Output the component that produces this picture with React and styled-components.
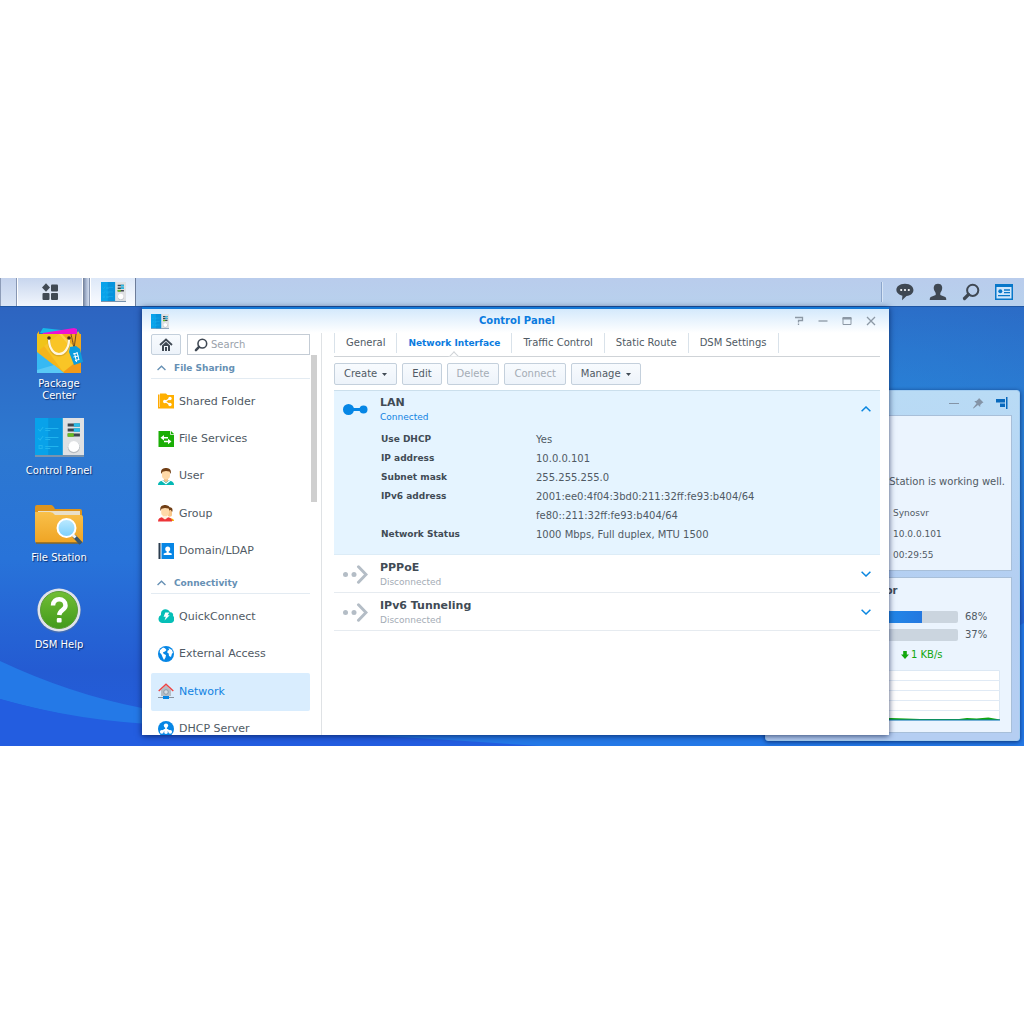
import React from "react";
import styled, { createGlobalStyle, css } from "styled-components";

const GlobalStyle = createGlobalStyle`
  * { box-sizing: border-box; }
  body {
    margin: 0;
    background: #fff;
    color: #505a64;
    font: 10px/14px "DejaVu Sans", sans-serif;
  }
  #root {
    min-height: 100vh;
    display: flex;
    flex-direction: column;
    justify-content: center;
  }
  button, input { font: inherit; color: inherit; }
  svg { display: block; flex: none; }
`;

const Desktop = styled.main`
  position: relative;
  display: flex;
  flex-direction: column;
  min-height: 468px;
  overflow: hidden;
  isolation: isolate;
`;

const Wallpaper = styled.svg`
  position: absolute;
  inset: 0;
  width: 100%;
  height: 100%;
  z-index: -1;
`;

const PlainButton = styled.button`
  display: flex;
  align-items: center;
  justify-content: center;
  padding: 0;
  border: 0;
  background: none;
  cursor: pointer;
`;

const Taskbar = styled.header`
  display: flex;
  height: 29px;
  background: linear-gradient(#b9ccec, #b8d1ed);
  border-bottom: 1px solid #1e56a4;
`;

const TaskbarEdge = styled.div`
  width: 17px;
  border-left: 1px solid #8d9cb8;
  border-right: 1px solid #8796b2;
  background: linear-gradient(#c4d2ec, #dbe6f6);
`;

const TaskButton = styled(PlainButton)`
  width: ${(p) => p.$width}px;
  background: linear-gradient(${(p) => (p.$active ? "#dde8f8, #fafcff" : "#c8d6ee, #f2f6fd")});
  border-left: 1px solid #fff;
  border-right: 1px solid ${(p) => (p.$active ? "#6d7d9a" : "#fff")};
`;

const TaskGap = styled.div`
  width: 7px;
  background: linear-gradient(90deg, #6f7d97, #a6b5d0 3px, #d3def0 6px);
  border-right: 1px solid #8796b2;
`;

const Tray = styled.nav`
  display: flex;
  margin-left: auto;
  padding: 0 4px 0 7px;
  position: relative;
  &::before {
    content: "";
    width: 1px;
    position: absolute;
    left: 0;
    top: 4px;
    bottom: 4px;
    background: #8ba5cb;
    box-shadow: 1px 0 #d7e5f6;
  }
`;

const TrayButton = styled(PlainButton)`
  width: 33px;
`;

const Shortcuts = styled.nav`
  width: 118px;
  padding-top: 19px;
`;

const Shortcut = styled(PlainButton)`
  width: 100%;
  height: 87px;
  flex-direction: column;
  justify-content: flex-start;
  gap: 4px;
  color: #fff;
  line-height: 12px;
  text-shadow: 1px 1px 1px #0b2d6b;
  span { width: 72px; }
`;

const Window = styled.section`
  position: absolute;
  top: 29px;
  right: 135px;
  bottom: 11px;
  left: 142px;
  display: flex;
  flex-direction: column;
  background: #fff;
  border-top: 2px solid #1478d6;
  box-shadow: 0 1px 6px rgba(0, 20, 70, 0.75);
`;

const TitleBar = styled.header`
  display: grid;
  grid-template-columns: 1fr auto 1fr;
  align-items: center;
  height: 24px;
  padding: 0 6px 0 9px;
  background: linear-gradient(#d4e9fc, #fff);
`;

const WindowTitle = styled.h1`
  margin: 0;
  font-size: 10px;
  color: #0a7be0;
`;

const Controls = styled.div`
  display: flex;
  justify-content: flex-end;
`;

const ControlButton = styled(PlainButton)`
  width: 24px;
  height: 24px;
`;

const WindowBody = styled.div`
  display: flex;
  flex: 1;
  min-height: 0;
`;

const Sidebar = styled.aside`
  display: flex;
  flex-direction: column;
  width: 180px;
  padding: 1px 3px 0 9px;
  border-right: 1px solid #dfe2e5;
`;

const SearchRow = styled.div`
  display: flex;
  gap: 6px;
  margin-right: 8px;
`;

const buttonFace = css`
  border: 1px solid #c4d0dc;
  border-radius: 2px;
  background: linear-gradient(#f8fbfe, #edf3fa);
`;

const HomeButton = styled(PlainButton)`
  ${buttonFace}
  width: 30px;
  height: 21px;
`;

const SearchField = styled.label`
  display: flex;
  align-items: center;
  gap: 3px;
  flex: 1;
  min-width: 0;
  height: 21px;
  padding-left: 6px;
  border: 1px solid #c4ccd5;
  input {
    min-width: 0;
    flex: 1;
    padding: 0;
    border: 0;
    outline: 0;
    background: none;
  }
  input::placeholder { color: #9aa2ab; opacity: 1; }
`;

const SidebarScroll = styled.div`
  display: flex;
  gap: 1px;
  flex: 1;
  min-height: 0;
  overflow: hidden;
`;

const ScrollThumb = styled.div`
  width: 6px;
  height: 147px;
  background: #cfcfcf;
`;

const Groups = styled.div`
  width: 159px;
`;

const GroupTitle = styled(PlainButton)`
  width: 100%;
  height: 24px;
  justify-content: flex-start;
  gap: 8px;
  padding: 2px 0 0 6px;
  border-bottom: 1px solid #e3ebf2;
  color: #6690b4;
  font-size: 9px;
  font-weight: bold;
`;

const GroupList = styled.ul`
  display: grid;
  grid-auto-rows: 1fr;
  height: ${(p) => p.$height}px;
  margin: 4px 0 0;
  padding: 0;
  list-style: none;
`;

const NavLink = styled.a`
  display: flex;
  align-items: center;
  gap: 5px;
  height: 100%;
  padding-left: 7px;
  border-radius: 2px;
  font-size: 11px;
  text-decoration: none;
  color: ${(p) => (p.$active ? "#1283e2" : "#505a64")};
  background: ${(p) => (p.$active ? "#d9edfe" : "none")};
`;

const Content = styled.div`
  flex: 1;
  min-width: 0;
  padding: 0 9px 0 12px;
`;

const Tabs = styled.nav`
  display: flex;
  height: 24px;
  border-bottom: 1px solid #cfd3d7;
`;

const Tab = styled(PlainButton)`
  position: relative;
  height: 20px;
  padding: 0 11px;
  border-right: 1px solid #d9e2ea;
  white-space: nowrap;
  &:first-child { border-left: 1px solid #d9e2ea; }
  ${(p) =>
    p.$active &&
    css`
      color: #0a7be0;
      font-size: 9px;
      font-weight: bold;
      &::after {
        content: "";
        position: absolute;
        left: 50%;
        bottom: -8px;
        width: 7px;
        height: 7px;
        margin-left: -4px;
        background: #fff;
        border: 1px solid #cfd3d7;
        border-width: 1px 0 0 1px;
        transform: rotate(45deg);
        clip-path: polygon(-20% -20%, 110% -20%, -20% 110%);
      }
    `}
`;

const Toolbar = styled.div`
  display: flex;
  gap: 5px;
  margin: 6px 0 5px;
`;

const ToolButton = styled(PlainButton)`
  ${buttonFace}
  gap: 5px;
  height: 22px;
  padding: 0 9px;
  &:disabled { color: #a4acb5; cursor: default; }
`;

const Interfaces = styled.ul`
  margin: 0;
  padding: 0;
  list-style: none;
`;

const Interface = styled.li`
  border-bottom: 1px solid #e6ebf0;
  ${(p) => p.$open && css`
    background: #e5f4ff;
    box-shadow: inset 0 1px #cbdfec;
    border-color: #dcecf7;
  `}
`;

const InterfaceHeader = styled(PlainButton)`
  width: 100%;
  height: 37px;
  gap: 12px;
  padding: 0 9px;
  text-align: left;
`;

const InterfaceText = styled.span`
  display: flex;
  flex-direction: column;
  flex: 1;
  padding-top: 2px;
`;

const InterfaceName = styled.strong`
  font-size: 11px;
  line-height: 15px;
  color: #414b55;
`;

const InterfaceState = styled.span`
  font-size: 9px;
  color: ${(p) => (p.$on ? "#1283e2" : "#a4acb5")};
`;

const Details = styled.table`
  margin: 3px 0 10px 47px;
  border-spacing: 0;
  line-height: 19px;
  th {
    width: 155px;
    padding: 0;
    font-size: 9px;
    text-align: left;
    vertical-align: top;
    color: #414b55;
  }
  td { padding: 0; }
`;

const Widgets = styled.aside`
  position: absolute;
  right: 4px;
  bottom: 5px;
  width: 255px;
  padding: 0 7px 7px;
  border: 1px solid #a5cdf0;
  border-radius: 3px;
  background: linear-gradient(#b9dbf5, #b4cff2 55%, #b5cef2);
  box-shadow: 0 1px 4px rgba(0, 20, 70, 0.7);
`;

const WidgetControls = styled.div`
  display: flex;
  justify-content: flex-end;
  height: 24px;
  margin-right: -2px;
`;

const WidgetCard = styled.section`
  height: 156px;
  border: 1px solid #a8bfd9;
  background: #ebf4fe;
  & + & {
    margin-top: 6px;
    padding: 0 11px 0 10px;
  }
`;

const HealthText = styled.p`
  margin: 0;
  padding: 56px 6px 11px;
  line-height: 20px;
  text-align: right;
  white-space: nowrap;
`;

const HealthValues = styled.ul`
  margin: 0;
  padding: 0 0 0 119px;
  list-style: none;
  font-size: 9px;
  line-height: 21px;
`;

const MonitorTitle = styled.h2`
  margin: 0;
  padding: 6px 0 12px 14px;
  font-size: 10px;
  line-height: 14px;
  color: #414b55;
`;

const Meter = styled.div`
  display: grid;
  grid-template-columns: 54px 1fr 35px;
  gap: 7px;
  align-items: center;
  height: 12px;
  margin-bottom: 6px;
`;

const MeterTrack = styled.div`
  height: 12px;
  overflow: hidden;
  border-radius: 2px;
  background: #cbd5df;
`;

const MeterFill = styled.div`
  height: 100%;
  background: linear-gradient(90deg, #1d9bf3, #2478e0);
`;

const Rate = styled.div`
  display: flex;
  align-items: center;
  gap: 2px;
  height: 16px;
  margin: 7px 0;
  padding-left: 117px;
  color: #12a70d;
`;

const Chart = styled.svg`
  width: 100%;
  height: 51px;
`;

function ControlPanelIcon({ width, height }) {
  return (
    <svg width={width} height={height} viewBox="0 0 48 39" preserveAspectRatio="none">
      <rect width="48" height="39" fill="#dfe1e3" />
      <rect y="37" width="48" height="2" fill="#245483" opacity=".55" />
      <rect width="27" height="37" fill="#08a2ea" />
      <path d="M13 0h14v37H13z" fill="#0793dc" />
      <path d="M3 11l2 2 3-4M3 20l2 2 3-4M4 27.500h3v3H4zM10 10.500h13M10 12.500h5M10 19.500h13M10 21.500h5M10 28.500h13M10 30.500h5" fill="none" stroke="#20b4ee" strokeWidth="1" />
      <path d="M32 7h12M32 12h12M32 17h12" stroke="#40464d" strokeWidth="3" />
      <path d="M38 7h6M38 12h6" stroke="#29bce9" strokeWidth="3.500" />
      <path d="M32 17h6" stroke="#68bd22" strokeWidth="3.500" />
      <circle cx="38" cy="29.300" r="5.900" fill="#b6bbc0" />
      <circle cx="38" cy="28.500" r="5.400" fill="#fff" />
    </svg>
  );
}

function PackageIcon() {
  return (
    <svg width="48" height="48" viewBox="0 0 48 48">
      <path d="M5 7l3-5 36 4 1 5z" fill="#16b9e9" />
      <path d="M8 7l31-5 3 1v6H7z" fill="#ee12d2" />
      <path d="M2 8l2-3v3h38l1-3 3 5v37H2z" fill="#f5b51c" />
      <path d="M2 8h22L2 26z" fill="#f0c419" />
      <path d="M24 8l22 26V8z" fill="#f2a91c" />
      <path d="M24 8L9 20l20 27 17-13z" fill="#f9c526" />
      <path d="M46 34L24 8h3l19 20z" fill="#fbd148" />
      <path d="M46 32v15H27z" fill="#f39a18" />
      <path d="M2 26l27 21H2z" fill="#36b9f3" />
      <path d="M2 44l17-5 10 8H2z" fill="#59c9f6" />
      <path d="M14 14c0 20 20 20 20 0" fill="none" stroke="#a47b22" strokeWidth="3" opacity=".35" />
      <path d="M14 13c0 20 20 20 20 0" fill="none" stroke="#fff6df" strokeWidth="2.200" />
      <circle cx="14" cy="12" r="1.800" fill="#44301b" />
      <circle cx="34" cy="12" r="1.800" fill="#44301b" />
      <path d="M36 8c1 5 2 8 3 15M41 8l-2 15" stroke="#6e4b22" fill="none" />
      <path d="M35 21l6-1 4 3 3 13-9 3-5-13z" fill="#0d9ddd" />
      <path d="M38 28l4-1M38.500 31l5-1M40 34.500l4-1M39.500 27l2 9M42 26l2 8" stroke="#fff" strokeWidth="1" />
    </svg>
  );
}

function FolderIcon() {
  return (
    <svg width="50" height="48" viewBox="0 0 50 48">
      <defs>
        <linearGradient id="folder" x2="0" y2="1"><stop stopColor="#f9c04a" /><stop offset="1" stopColor="#efa424" /></linearGradient>
        <linearGradient id="lens" x2="0" y2="1"><stop stopColor="#bdeaff" /><stop offset="1" stopColor="#7acffc" /></linearGradient>
      </defs>
      <path d="M1 7q0-2 2-2h14q2 0 4 4h25q2 0 2 2v8H1z" fill="#dd941d" />
      <path d="M4 11h42v6H4z" fill="#e9dfc8" />
      <path d="M1 12h15q3 0 5 3h26q2 0 2 2v24q0 2-2 2H3q-2 0-2-2z" fill="url(#folder)" />
      <path d="M2 43h45" stroke="#8b671f" strokeWidth="1.500" />
      <path d="M40 36l7 7.500" stroke="#38566e" strokeWidth="4" />
      <path d="M39 35l2.500 2.500" stroke="#eef3f6" strokeWidth="3" />
      <circle cx="32.500" cy="28" r="9" fill="url(#lens)" stroke="#fff" strokeWidth="2" />
    </svg>
  );
}

function HelpIcon() {
  return (
    <svg width="48" height="48" viewBox="0 0 48 48">
      <defs><linearGradient id="help" x2="0" y2="1"><stop stopColor="#72be35" /><stop offset="1" stopColor="#429a1b" /></linearGradient></defs>
      <circle cx="24" cy="24" r="22" fill="#54719e" opacity=".6" />
      <circle cx="24" cy="23" r="21.500" fill="#dfe3ea" />
      <circle cx="24" cy="23" r="18.500" fill="url(#help)" stroke="#5a9c37" />
      <path d="M18 18.500c0-8.500 12.500-8 12.500 0 0 4.500-6 4.500-6.300 9.500" fill="none" stroke="#fff" strokeWidth="4.500" />
      <rect x="21.800" y="31" width="4.800" height="4.500" rx="1" fill="#fff" />
    </svg>
  );
}

function SearchIcon({ size = 18 }) {
  return (
    <svg width={size} height={size} viewBox="0 0 18 18" fill="none" stroke="#3f4853">
      <circle cx="10.700" cy="7.300" r="5.600" strokeWidth="2" />
      <path d="M6.500 11.500L2.500 15.500" strokeWidth="3.200" strokeLinecap="round" />
    </svg>
  );
}

function Chevron({ up, color = "#0a86e0", width = 10 }) {
  return (
    <svg width={width} height="6" viewBox="0 0 10 6" fill="none" stroke={color} strokeWidth="1.500">
      <path d={up ? "M.6 5.300L5 1l4.400 4.300" : "M.6.7L5 5 9.400.7"} />
    </svg>
  );
}

const Caret = () => (
  <svg width="5" height="3" viewBox="0 0 5 3"><path d="M0 0h5L2.500 3z" fill="#414b55" /></svg>
);

const navGlyphs = {
  shared: (
    <>
      <path d="M0 1.500h1.500V14H16v1.500H0z" fill="#ffa900" />
      <path d="M2 .5h6L9.500 2H16v13H2z" fill="#ffb000" />
      <path d="M12 5.500L7 8.500l5 3" fill="none" stroke="#fff" strokeWidth="1.300" />
      <g fill="#fff"><circle cx="12" cy="5.500" r="1.700" /><circle cx="6.700" cy="8.500" r="1.700" /><circle cx="12" cy="11.500" r="1.700" /></g>
    </>
  ),
  files: (
    <>
      <path d="M.5 0h11.700v3.700H16V16H.5z" fill="#1aae05" />
      <path d="M13 0l3 3h-3z" fill="#1aae05" />
      <path d="M2.500 6.800L6 4v2h4v1.600H6v2zM13.500 10.500L10 7.800v1.900H6v1.600h4v2z" fill="#fff" />
    </>
  ),
  user: (
    <>
      <path d="M0 17c0-3 2.500-4 5.500-4.500h5C13.500 13 16 14 16 17z" fill="#04b8b4" />
      <path d="M6 10h4v3l-2 1.500L6 13z" fill="#f0bd87" />
      <path d="M4 3h8v5c0 4.500-8 4.500-8 0z" fill="#ffd9a8" />
      <path d="M3.300 6C2 .5 6 0 8 0s6 .5 4.700 6l-1.200-2.500L8 3l-3.500.8z" fill="#713f16" />
      <path d="M5 12.500l3 2.500 3-2.500 1.500.5L8 16.500 3.500 13z" fill="#fff" />
    </>
  ),
  group: (
    <>
      <path d="M9 15c0-2 7-3 7 1H9z" fill="#f4ad05" />
      <path d="M10 5h4v5c0 2-3 2-4 1z" fill="#f8c78a" />
      <path d="M9.500 3c4-2 6 1 4.600 4l-1.200-2H10z" fill="#713f16" />
      <path d="M0 16.500c0-3 2-4 5-4.500h4c3 .5 5 1.500 5 4.500z" fill="#ed3438" />
      <path d="M3.200 3H11v5c0 4.500-7.800 4.500-7.800 0z" fill="#ffd9a8" />
      <path d="M2.500 6C1.300.8 5 0 7 0s6 .8 4.800 6l-1.200-2.500L7 3l-3.500.8z" fill="#713f16" />
      <path d="M5 11h4l1 1.500-3 2-3-2z" fill="#fff0dc" />
    </>
  ),
  domain: (
    <>
      <path d="M.5 0h2v16h-2z" fill="#2b3d4f" />
      <path d="M3.500 0H16v16H3.500z" fill="#0686e5" />
      <circle cx="9.700" cy="6" r="2.500" fill="#fff" />
      <path d="M8.700 7h2v2.500l3 1V12H5.700v-1.500l3-1z" fill="#fff" />
    </>
  ),
  quick: (
    <>
      <path d="M4 15a4.200 4.200 0 0 1-1-8C2 .5 10-.5 12 4.300c3-.3 3.500 2.600 3 3.500C17.500 10 16 15 13 15z" fill="#05bfb7" />
      <path d="M7.300 4.500h4L9.700 7.300h2L6.500 12.500l1.300-3.700H5.600z" fill="#fff" />
    </>
  ),
  external: (
    <>
      <circle cx="8" cy="8" r="8" fill="#0686e5" />
      <path d="M2 4l3-2.500 2 .8L8.500 4 7 5.500 5 6.200l.5 1.500L8 9l-.5 2.500L6 14 4.500 11 3.500 8.500 1.700 6.500zM10.500 2l3.500 2 1 3-1 .5-1 3.500-2-1-.3-2.500-1.500-1 .5-2L11.200 4z" fill="#fff" />
    </>
  ),
  network: (
    <>
      <path d="M3 7l5-4.500L13 7v6H3z" fill="#b5bdc5" />
      <circle cx="8" cy="9" r="2.300" fill="#d5dce2" stroke="#8f9ba7" />
      <path d="M.7 8L8 1.300 15.300 8" fill="none" stroke="#ee4545" strokeWidth="1.500" />
      <path d="M0 14.500h16" stroke="#8793a0" />
      <path d="M5 13h6v3H5z" fill="#0686e5" />
    </>
  ),
  dhcp: (
    <>
      <circle cx="8" cy="8" r="8" fill="#0686e5" />
      <circle cx="8" cy="4.600" r="2.200" fill="#fff" />
      <path d="M8 5v5M8 8L3.500 11M8 8l4.500 3" stroke="#fff" strokeWidth="1.700" />
      <g fill="#fff"><circle cx="3.800" cy="10.800" r="1.900" /><circle cx="8" cy="11" r="1.900" /><circle cx="12.200" cy="10.800" r="1.900" /></g>
    </>
  ),
};

const groups = [
  { title: "File Sharing", height: 187, items: [["Shared Folder", "shared"], ["File Services", "files"], ["User", "user"], ["Group", "group"], ["Domain/LDAP", "domain"]] },
  { title: "Connectivity", height: 150, items: [["QuickConnect", "quick"], ["External Access", "external"], ["Network", "network"], ["DHCP Server", "dhcp"]] },
];

const details = [
  ["Use DHCP", ["Yes"]],
  ["IP address", ["10.0.0.101"]],
  ["Subnet mask", ["255.255.255.0"]],
  ["IPv6 address", ["2001:ee0:4f04:3bd0:211:32ff:fe93:b404/64", "fe80::211:32ff:fe93:b404/64"]],
  ["Network Status", ["1000 Mbps, Full duplex, MTU 1500"]],
];

const shortcuts = [
  ["Package Center", <PackageIcon />],
  ["Control Panel", <svg width="49" height="48"><g transform="translate(0 5)"><ControlPanelIcon width="49" height="39" /></g></svg>],
  ["File Station", <FolderIcon />],
  ["DSM Help", <HelpIcon />],
];

const windowControls = [
  ["Help", <path d="M2 2.500h7.500v3h-4v2M5.500 8.500v1.500" />],
  ["Minimize", <path d="M1.500 6h9" />],
  ["Maximize", <><path d="M2 2.500h8v7H2z" strokeWidth="1" /><path d="M1.500 3.500h9" strokeWidth="2" /></>],
  ["Close", <path d="M2 2l8 8M10 2l-8 8" />],
];

function InterfaceRow({ name, connected, children }) {
  return (
    <Interface $open={connected}>
      <InterfaceHeader type="button" aria-expanded={!!connected}>
        <svg width="25" height="20" viewBox="0 0 25 20">
          {connected ? (
            <g fill="#0686e5"><circle cx="5.500" cy="10.500" r="5.500" /><path d="M8 9h12v3H8z" /><circle cx="20.500" cy="10.500" r="4" /></g>
          ) : (
            <g fill="#b4bdc6"><circle cx="2.500" cy="10.500" r="2.500" /><circle cx="11" cy="10.500" r="2.500" /><path d="M15.500 2.800L23 10.500l-7.500 7.700" fill="none" stroke="#b4bdc6" strokeWidth="3" strokeLinecap="round" /></g>
          )}
        </svg>
        <InterfaceText>
          <InterfaceName>{name}</InterfaceName>
          <InterfaceState $on={connected}>{connected ? "Connected" : "Disconnected"}</InterfaceState>
        </InterfaceText>
        <Chevron up={connected} />
      </InterfaceHeader>
      {children}
    </Interface>
  );
}

function ControlPanel() {
  return (
    <Window>
      <TitleBar>
        <ControlPanelIcon width="18" height="15" />
        <WindowTitle>Control Panel</WindowTitle>
        <Controls>
          {windowControls.map(([label, shape]) => (
            <ControlButton key={label} type="button" aria-label={label}>
              <svg width="12" height="12" fill="none" stroke="#8c98a5" strokeWidth="1.300">{shape}</svg>
            </ControlButton>
          ))}
        </Controls>
      </TitleBar>
      <WindowBody>
        <Sidebar>
          <SearchRow>
            <HomeButton type="button" aria-label="Home">
              <svg width="14" height="14" viewBox="0 0 14 14" fill="#3f4853">
                <path d="M3 7.500l4-3.700 4 3.700V13H3z" />
                <path d="M1 7l6-5.500L13 7" fill="none" stroke="#3f4853" strokeWidth="1.800" />
                <path d="M5 8h4v5H5z" fill="#f4f8fc" />
                <path d="M6 9h2v4H6z" />
              </svg>
            </HomeButton>
            <SearchField>
              <SearchIcon size={14} />
              <input type="text" placeholder="Search" aria-label="Search" />
            </SearchField>
          </SearchRow>
          <SidebarScroll>
            <Groups>
              {groups.map((group) => (
                <React.Fragment key={group.title}>
                  <GroupTitle type="button"><Chevron up color="#6690b4" width={9} />{group.title}</GroupTitle>
                  <GroupList $height={group.height}>
                    {group.items.map(([label, glyph]) => (
                      <li key={label}>
                        <NavLink href="#" $active={label === "Network"}>
                          <svg width="16" height="17" viewBox="0 0 16 17">{navGlyphs[glyph]}</svg>
                          {label}
                        </NavLink>
                      </li>
                    ))}
                  </GroupList>
                </React.Fragment>
              ))}
            </Groups>
            <ScrollThumb />
          </SidebarScroll>
        </Sidebar>
        <Content>
          <Tabs>
            {["General", "Network Interface", "Traffic Control", "Static Route", "DSM Settings"].map((tab) => (
              <Tab key={tab} type="button" $active={tab === "Network Interface"}>{tab}</Tab>
            ))}
          </Tabs>
          <Toolbar>
            <ToolButton type="button">Create<Caret /></ToolButton>
            <ToolButton type="button">Edit</ToolButton>
            <ToolButton type="button" disabled>Delete</ToolButton>
            <ToolButton type="button" disabled>Connect</ToolButton>
            <ToolButton type="button">Manage<Caret /></ToolButton>
          </Toolbar>
          <Interfaces>
            <InterfaceRow name="LAN" connected>
              <Details>
                <tbody>
                  {details.map(([label, lines]) => (
                    <tr key={label}>
                      <th scope="row">{label}</th>
                      <td>{lines.map((line) => <div key={line}>{line}</div>)}</td>
                    </tr>
                  ))}
                </tbody>
              </Details>
            </InterfaceRow>
            <InterfaceRow name="PPPoE" />
            <InterfaceRow name="IPv6 Tunneling" />
          </Interfaces>
        </Content>
      </WindowBody>
    </Window>
  );
}

function WidgetPanel() {
  return (
    <Widgets>
      <WidgetControls>
        <ControlButton type="button" aria-label="Minimize widgets">
          <svg width="12" height="12"><path d="M1 6.500h10" stroke="#8494a7" /></svg>
        </ControlButton>
        <ControlButton type="button" aria-label="Pin widgets">
          <svg width="12" height="12" fill="#8494a7"><path d="M7 1l4.500 4.500-1.300.4-2 2.100v2L6 8 1.500 11.500 1 11l3.500-4.500L2.300 4h2L6.500 2z" /></svg>
        </ControlButton>
        <ControlButton type="button" aria-label="Dock widgets">
          <svg width="12" height="12" fill="#0869bd"><path d="M10 0h1.500v12H10zM0 2h9v3.500H0zM4 6.500h5V10H4z" /></svg>
        </ControlButton>
      </WidgetControls>
      <WidgetCard>
        <HealthText>Your DiskStation is working well.</HealthText>
        <HealthValues>
          <li>Synosvr</li>
          <li>10.0.0.101</li>
          <li>00:29:55</li>
        </HealthValues>
      </WidgetCard>
      <WidgetCard>
        <MonitorTitle>Resource Monitor</MonitorTitle>
        {[["CPU", 68], ["RAM", 37]].map(([name, value]) => (
          <Meter key={name}>
            <span>{name}</span>
            <MeterTrack><MeterFill style={{ width: `${value}%` }} /></MeterTrack>
            <span>{value}%</span>
          </Meter>
        ))}
        <Rate>
          <svg width="8" height="8" viewBox="0 0 8 8" fill="#12a70d"><path d="M2.200 0h3.600v3.500H8L4 8 0 3.500h2.200z" /></svg>
          1 KB/s
        </Rate>
        <Chart viewBox="0 0 222 51" preserveAspectRatio="none">
          <path d="M.5.5h221v50H.5z" fill="#fff" stroke="#dbe8f4" />
          <path d="M0 10.500h222M0 20.500h222M0 30.500h222M0 40.500h222" stroke="#dfeaf5" />
          <path d="M0 50v-2h110l30 1h40l8-1 10 .5 12-1 12 2V50z" fill="#12a70d" />
          <path d="M0 50h222" stroke="#0876b8" />
        </Chart>
      </WidgetCard>
    </Widgets>
  );
}

export default function App() {
  return (
    <>
      <GlobalStyle />
      <Desktop>
        <Wallpaper viewBox="0 0 1024 468" preserveAspectRatio="none" aria-hidden="true">
          <defs>
            <linearGradient id="sky" x2="0" y2="1">
              <stop offset="0" stopColor="#2d60bd" />
              <stop offset=".35" stopColor="#2d78d0" />
              <stop offset=".6" stopColor="#2873d9" />
              <stop offset=".84" stopColor="#245bd2" />
              <stop offset="1" stopColor="#235fe0" />
            </linearGradient>
            <radialGradient id="glow" cx=".85" cy=".3" r=".4">
              <stop stopColor="#258de0" stopOpacity=".6" />
              <stop offset="1" stopColor="#258de0" stopOpacity="0" />
            </radialGradient>
          </defs>
          <path d="M0 0h1024v468H0z" fill="url(#sky)" />
          <path d="M0 0h1024v468H0z" fill="url(#glow)" />
          <path d="M0 383Q70 416 142 430C400 480 800 460 1024 345V468H300Q100 450 0 421z" fill="#2479e7" />
          <path d="M0 421Q80 444 170 447 300 452 540 468H0z" fill="#235de0" />
        </Wallpaper>
        <Taskbar>
          <TaskbarEdge />
          <TaskButton type="button" $width={66} aria-label="Main Menu">
            <svg width="18" height="18" viewBox="0 0 18 18" fill="#414a54">
              <path d="M5 .3L9 4.500 5 8.700 1 4.500z" />
              <rect x="10" y="1.500" width="7" height="7" rx="1" />
              <rect x="1.500" y="10" width="7" height="7" rx="1" />
              <rect x="10" y="10" width="7" height="7" rx="1" />
            </svg>
          </TaskButton>
          <TaskGap />
          <TaskButton type="button" $width={46} $active aria-label="Control Panel"><ControlPanelIcon width="25" height="20" /></TaskButton>
          <Tray>
            <TrayButton type="button" aria-label="Notifications">
              <svg width="18" height="18" viewBox="0 0 18 18" fill="#3f4853">
                <path d="M9 .7c11 0 11 12 1.500 12.300L6 17.300l.4-4.600C-2.500 11-1.500.7 9 .7z" />
                <g fill="#fff"><circle cx="5.200" cy="7" r="1.100" /><circle cx="9" cy="7" r="1.100" /><circle cx="12.800" cy="7" r="1.100" /></g>
              </svg>
            </TrayButton>
            <TrayButton type="button" aria-label="Options">
              <svg width="18" height="18" viewBox="0 0 18 18" fill="#3f4853"><path d="M9 .8c4 0 5 3.500 3.700 6.700L11.300 10v2l5 2q1 .7 1 3H.7q0-2.300 1-3l5-2v-2L5.300 7.500C4 4.300 5 .8 9 .8z" /></svg>
            </TrayButton>
            <TrayButton type="button" aria-label="Search"><SearchIcon /></TrayButton>
            <TrayButton type="button" aria-label="Widgets">
              <svg width="18" height="16" viewBox="0 0 18 16">
                <path d="M0 0h18v16H0z" fill="#0877c9" />
                <path d="M1.500 3h15v11.500h-15z" fill="#cfe6fb" />
                <circle cx="5.300" cy="7.200" r="2" fill="#0877c9" />
                <path d="M9 6h6M9 8.700h6M3 11.700h12" stroke="#0877c9" strokeWidth="1.300" />
              </svg>
            </TrayButton>
          </Tray>
        </Taskbar>
        <Shortcuts>
          {shortcuts.map(([label, icon]) => (
            <Shortcut key={label} type="button">{icon}<span>{label}</span></Shortcut>
          ))}
        </Shortcuts>
        <WidgetPanel />
        <ControlPanel />
      </Desktop>
    </>
  );
}
